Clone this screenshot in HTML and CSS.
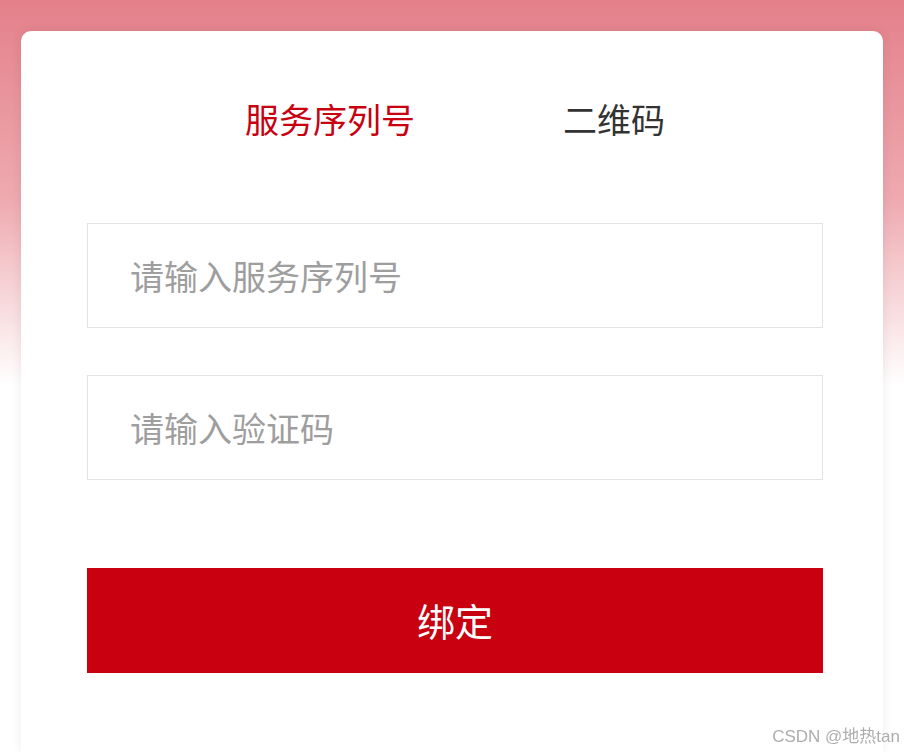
FILE: index.html
```html
<!DOCTYPE html>
<html lang="zh-CN">
<head>
  <meta charset="UTF-8" />
  <meta name="viewport" content="width=device-width, initial-scale=1.0"/>
  <title>绑定服务</title>
  <link rel="stylesheet" href="styles.css">
</head>
<body>

  <div class="page">
    <div class="card">
      <!-- Tabs -->
      <div class="tabs">
        <div class="tab active">服务序列号</div>
        <div class="tab">二维码</div>
      </div>

      <form class="bind-form" onsubmit="return false">
        <input class="field" type="text" placeholder="请输入服务序列号">
        <input class="field" type="text" placeholder="请输入验证码">
        <button class="bind-btn" type="submit">绑定</button>
      </form>
    </div>
  </div>

  <div class="watermark">CSDN @地热tan</div>

</body>
</html>
```

FILE: styles.css
```css
body {
  margin: 0;
  padding: 0;
  font-family: "Noto Sans CJK SC", "Liberation Sans", sans-serif;
  height: 100vh;
  overflow: hidden;
  background: linear-gradient(to bottom, #e4808a 0, #eeaab0 200px, #ffffff 385px);
  background-repeat: no-repeat;
  background-color: #fff;
}

.page {
  padding: 31px 21px 0;
}

.card {
  box-sizing: border-box;
  min-height: calc(100vh - 31px);
  background: #fff;
  border-radius: 10px 10px 0 0;
  box-shadow: 0 0 12px rgba(0, 0, 0, 0.08);
  padding: 64px 60px 0 66px;
}

.tabs {
  display: flex;
  justify-content: center;
  gap: 148px;
}

.tab {
  font-size: 34px;
  line-height: 48px;
  color: #333;
  cursor: pointer;
}

.tab.active {
  color: #c8000f;
}

.bind-form {
  display: flex;
  flex-direction: column;
  gap: 47px;
  margin-top: 80px;
}

.field {
  box-sizing: border-box;
  height: 105px;
  border: 1px solid #e3e3e3;
  padding: 0 0 0 42px;
  font-family: inherit;
  font-size: 34px;
  color: #333;
  outline: none;
}

.field::placeholder {
  color: #9e9e9e;
}

.bind-btn {
  margin-top: 41px;
  height: 105px;
  border: none;
  background: #c8000f;
  color: #fff;
  font-family: inherit;
  font-size: 38px;
  line-height: 1;
  padding: 0 0 2px;
  cursor: pointer;
}

.watermark {
  position: fixed;
  right: 4px;
  bottom: 5px;
  font-family: "Liberation Sans", "Noto Sans CJK SC", sans-serif;
  font-size: 17px;
  color: #adadad;
  text-shadow: 0 0 2px #fff;
}
```
